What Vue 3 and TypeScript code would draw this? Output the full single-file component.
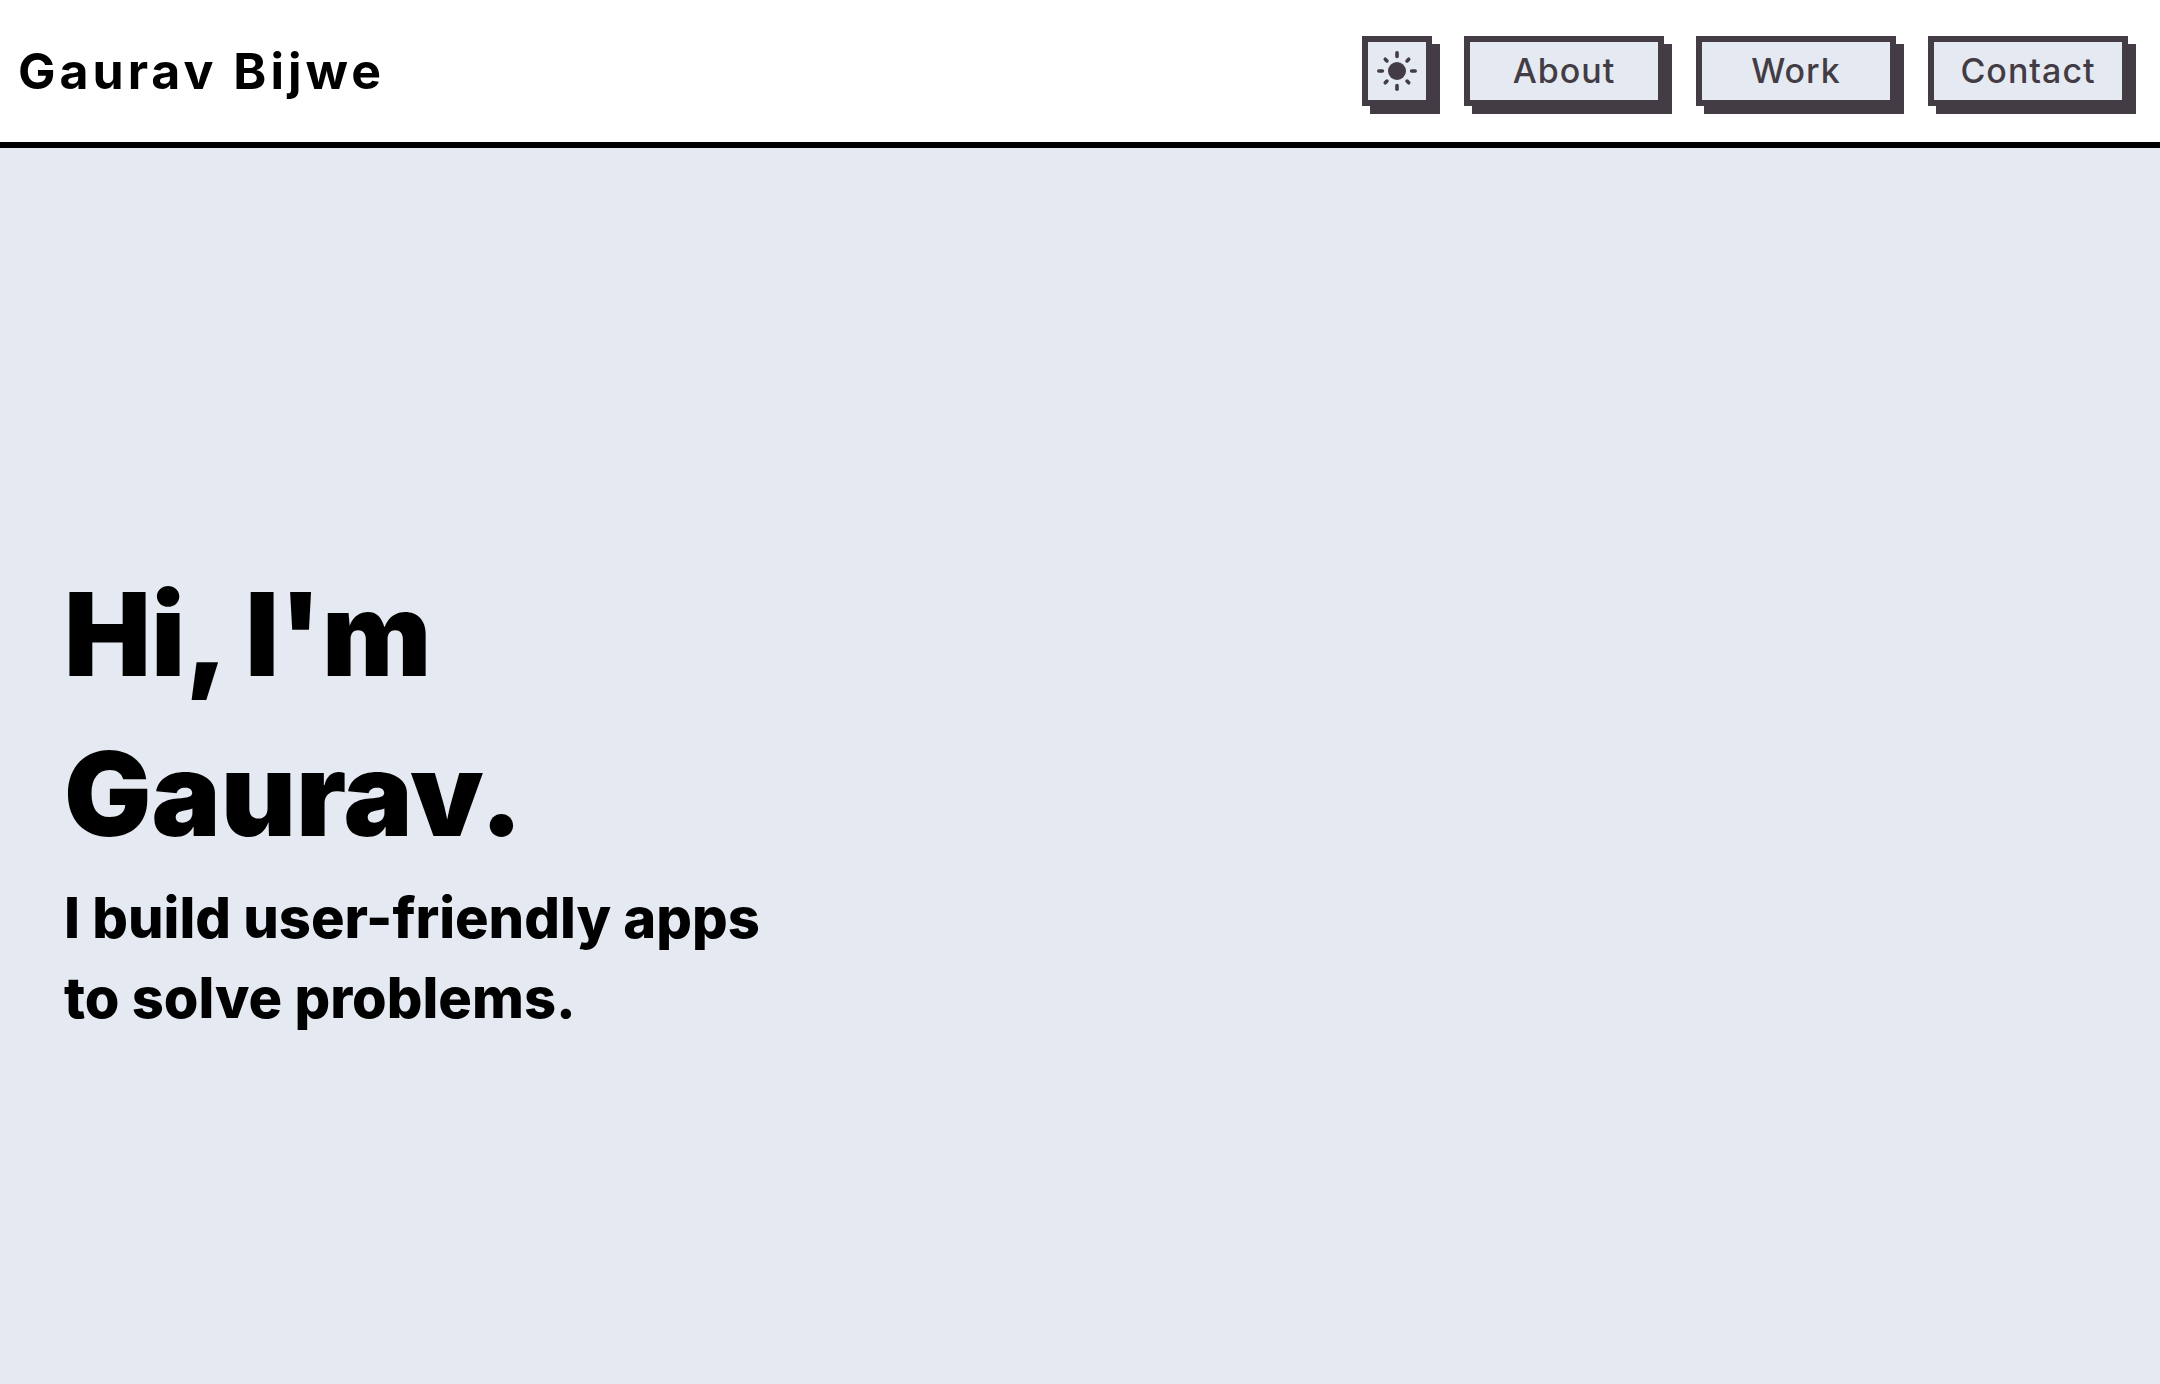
<script setup lang="ts">
import { ref } from 'vue'

interface NavLink {
  label: string
  href: string
}

const links: NavLink[] = [
  { label: 'About', href: '#about' },
  { label: 'Work', href: '#work' },
  { label: 'Contact', href: '#contact' },
]

const rays: number[] = [0, 45, 90, 135, 180, 225, 270, 315]
const dark = ref(false)
</script>

<template>
  <div class="page">
    <header class="header">
      <a class="brand" href="#home">Gaurav Bijwe</a>
      <nav class="nav">
        <button
          class="box toggle"
          type="button"
          aria-label="Toggle theme"
          :aria-pressed="dark"
          @click="dark = !dark"
        >
          <svg class="sun" viewBox="0 0 42 42" aria-hidden="true">
            <circle cx="21" cy="21" r="9" fill="currentColor" />
            <line
              v-for="angle in rays"
              :key="angle"
              x1="21"
              :y1="angle % 90 ? 4.4 : 2.8"
              x2="21"
              :y2="angle % 90 ? 6.8 : 6.4"
              stroke="currentColor"
              stroke-width="3.6"
              stroke-linecap="round"
              :transform="`rotate(${angle} 21 21)`"
            />
          </svg>
        </button>
        <a v-for="link in links" :key="link.label" class="box link" :href="link.href">{{ link.label }}</a>
      </nav>
    </header>
    <main class="hero">
      <h1 class="title">Hi, I'm<br />Gaurav.</h1>
      <p class="tagline">I build user-friendly apps<br />to solve problems.</p>
    </main>
  </div>
</template>

<style>
body {
  margin: 0;
  background: #e5eaf2;
}
</style>

<style scoped>
.page {
  display: flex;
  flex-direction: column;
  min-height: 100vh;
  background: #e5eaf2;
  color: #000;
  font-family: Inter, "Liberation Sans", sans-serif;
}

.header {
  display: flex;
  align-items: center;
  justify-content: space-between;
  padding: 36px 32px 36px 18px;
  background: #fff;
  border-bottom: 6px solid #000;
}

.brand {
  color: inherit;
  font-size: 50px;
  font-weight: 700;
  line-height: 64px;
  letter-spacing: 4px;
  text-decoration: none;
}

.nav {
  display: flex;
  gap: 32px;
}

.box {
  box-sizing: border-box;
  display: flex;
  align-items: center;
  justify-content: center;
  height: 70px;
  padding: 0;
  border: 6px solid #443c44;
  box-shadow: 8px 8px 0 #443c44;
  background: #e5eaf2;
  color: #443c44;
}

.toggle {
  width: 70px;
  cursor: pointer;
}

.link {
  width: 200px;
  padding-bottom: 2px;
  font-size: 34px;
  font-weight: 500;
  letter-spacing: 1px;
  text-decoration: none;
}

.sun {
  width: 42px;
  height: 42px;
}

.hero {
  flex: 1;
  display: flex;
  flex-direction: column;
  justify-content: center;
  padding: 60px 64px 0;
}

.title {
  margin: 0;
  font-size: 116px;
  font-weight: 900;
  line-height: 160px;
}

.tagline {
  margin: 4px 0 0;
  font-size: 56px;
  font-weight: 800;
  line-height: 80px;
}
</style>
